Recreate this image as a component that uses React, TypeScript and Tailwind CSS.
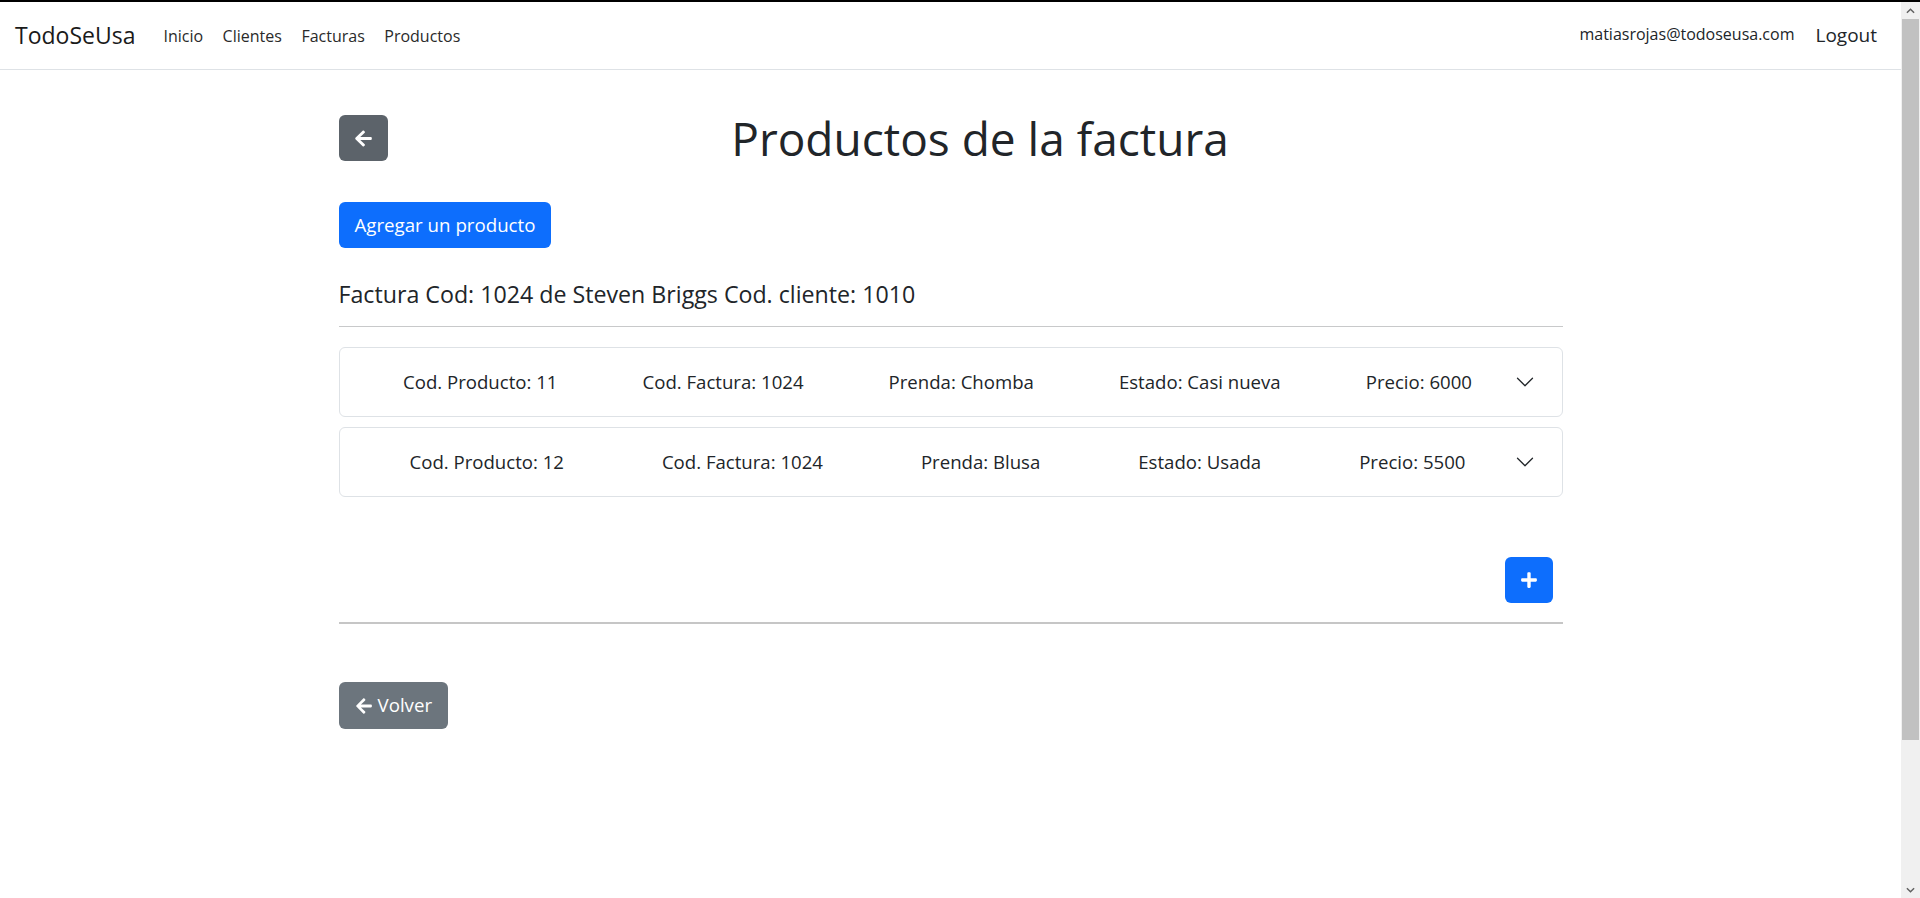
import { FaArrowLeft, FaPlus } from 'react-icons/fa'

type Producto = {
  cod: number
  factura: number
  prenda: string
  estado: string
  precio: number
}

const productos: Producto[] = [
  { cod: 11, factura: 1024, prenda: 'Chomba', estado: 'Casi nueva', precio: 6000 },
  { cod: 12, factura: 1024, prenda: 'Blusa', estado: 'Usada', precio: 5500 },
]

const Chevron = () => (
  <svg viewBox="0 0 16 16" className="h-5 w-5 shrink-0 fill-[#212529]">
    <path d="M1.646 4.646a.5.5 0 0 1 .708 0L8 10.293l5.646-5.647a.5.5 0 0 1 .708.708l-6 6a.5.5 0 0 1-.708 0l-6-6a.5.5 0 0 1 0-.708z" />
  </svg>
)

const Navbar = () => (
  <nav className="h-[68px] shrink-0 border-b border-[#dee2e6] flex items-center justify-between pl-[15px] pr-[24px]">
    <div className="flex items-center">
      <a className="text-[23px] text-[#1a1a1a] mr-[28px]">TodoSeUsa</a>
      <div className="flex items-center gap-[19.5px] text-[16px] text-[#2a2a2a]">
        <a>Inicio</a>
        <a>Clientes</a>
        <a>Facturas</a>
        <a>Productos</a>
      </div>
    </div>
    <div className="flex items-center gap-[21px]">
      <span className="text-[16px] text-[#212529] -mt-[4px]">matiasrojas@todoseusa.com</span>
      <a className="text-[19px] text-[#212529]">Logout</a>
    </div>
  </nav>
)

const FilaProducto = ({ p }: { p: Producto }) => (
  <div className="h-[70px] border border-[#dee2e6] rounded-[6px] flex items-center pl-[21px] pr-[27px]">
    <div className="flex-1 flex justify-around items-center text-[18.6px] text-[#212529]">
      <span>Cod. Producto: {p.cod}</span>
      <span>Cod. Factura: {p.factura}</span>
      <span>Prenda: {p.prenda}</span>
      <span>Estado: {p.estado}</span>
      <span>Precio: {p.precio}</span>
    </div>
    <Chevron />
  </div>
)

const Scrollbar = () => (
  <div className="w-[19px] shrink-0 bg-[#f0f0f0] flex flex-col">
    <div className="h-[17px] flex items-center justify-center text-[#606060]">
      <svg viewBox="0 0 10 6" className="w-[9px] h-[6px]"><path d="M1 5 L5 1 L9 5" stroke="currentColor" strokeWidth="1.6" fill="none" /></svg>
    </div>
    <div className="h-[721px] bg-[#c1c1c1] mx-[1px]" />
    <div className="flex-1" />
    <div className="h-[17px] flex items-center justify-center text-[#606060]">
      <svg viewBox="0 0 10 6" className="w-[9px] h-[6px]"><path d="M1 1 L5 5 L9 1" stroke="currentColor" strokeWidth="1.6" fill="none" /></svg>
    </div>
  </div>
)

export default function App() {
  return (
    <div className="h-screen w-full flex border-t-2 border-black overflow-hidden bg-white" style={{ fontFamily: '"Open Sans", sans-serif' }}>
      <div className="flex-1 flex flex-col min-w-0">
        <Navbar />
        <div className="w-[1224px] mx-auto">
          <div className="h-[46px] flex items-center mt-[45px]">
            <button type="button" className="h-[46px] w-[49px] shrink-0 rounded-[6px] bg-[#5c636a] text-white flex items-center justify-center">
              <FaArrowLeft className="text-[19px]" />
            </button>
            <h1 className="flex-1 text-center text-[46px] text-[#212529] leading-[46px] pl-[10px]">Productos de la factura</h1>
          </div>

          <button type="button" className="mt-[41px] h-[46px] px-[16px] rounded-[6px] bg-[#0d6efd] text-white text-[18.7px]">
            Agregar un producto
          </button>

          <h5 className="mt-[32px] text-[23.2px] leading-[28px] text-[#212529]">
            Factura Cod: 1024 de Steven Briggs Cod. cliente: 1010
          </h5>
          <hr className="mt-[18px] border-t border-[#c8c9ca]" />

          <div className="mt-[20px] flex flex-col gap-[10px]">
            {productos.map((p) => (
              <FilaProducto key={p.cod} p={p} />
            ))}
          </div>

          <div className="mt-[60px] flex justify-end pr-[10px]">
            <button type="button" className="h-[46px] w-[48px] rounded-[6px] bg-[#0d6efd] text-white flex items-center justify-center">
              <FaPlus className="text-[18px]" />
            </button>
          </div>
          <hr className="mt-[19px] border-t-2 border-[#c6c6c6]" />

          <button type="button" className="mt-[58px] h-[47px] px-[16px] rounded-[6px] bg-[#6c757d] text-white text-[18.7px] flex items-center gap-[5px]">
            <FaArrowLeft className="text-[18px]" />
            Volver
          </button>
        </div>
      </div>
      <Scrollbar />
    </div>
  )
}
